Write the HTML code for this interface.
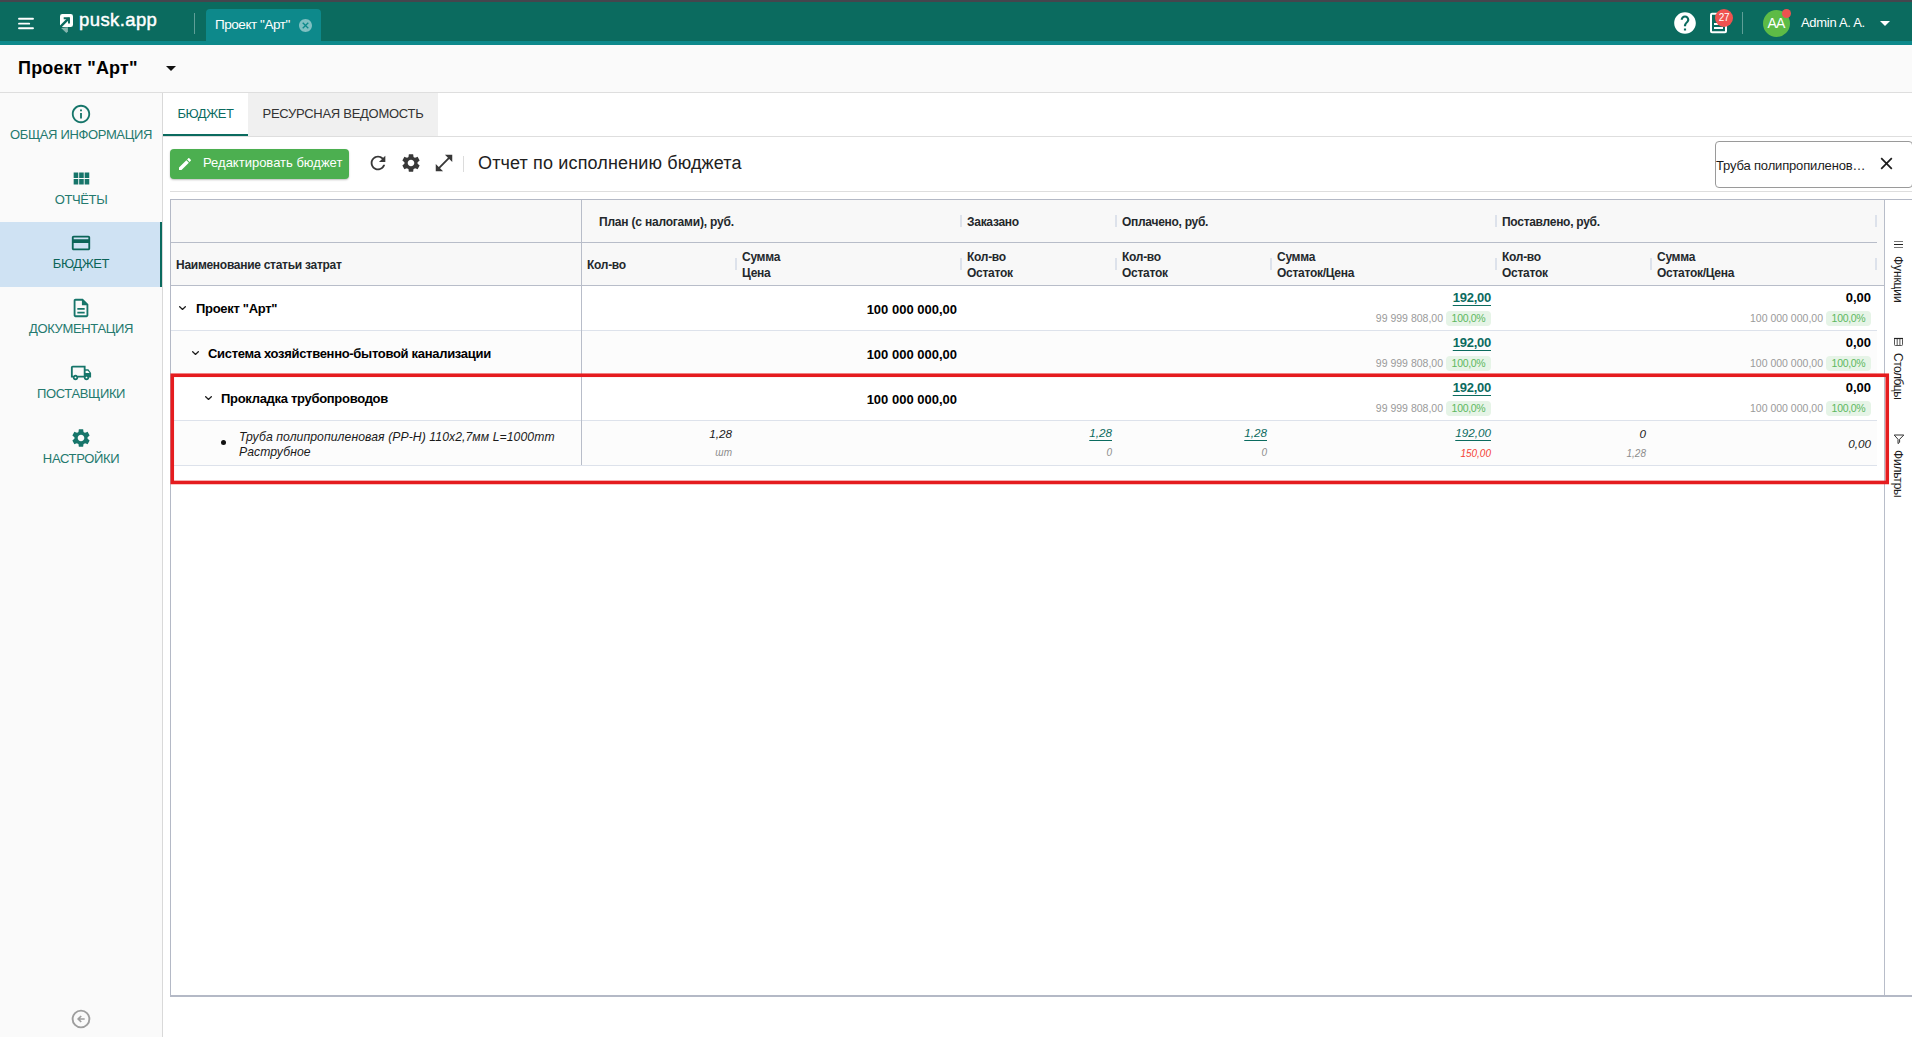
<!DOCTYPE html>
<html lang="ru">
<head>
<meta charset="utf-8">
<title>pusk.app</title>
<style>
*{box-sizing:border-box;margin:0;padding:0}
html,body{width:1912px;height:1037px;overflow:hidden;background:#fff}
body{position:relative;font-family:"Liberation Sans",sans-serif;font-size:13px;color:#000}
.abs{position:absolute}
svg{display:block}
/* ---------- top bar ---------- */
#strip{left:0;top:0;width:1912px;height:2px;background:#45454d}
#hdr{left:0;top:2px;width:1912px;height:43px;background:#0b6b5f;border-bottom:4px solid #0d898b}
#ham i{position:absolute;left:18px;height:2px;background:#fff;border-radius:1px}
#brand{transform:translateY(-.75px);left:79px;top:9px;font-size:18.5px;line-height:24px;color:#fff;font-weight:400;letter-spacing:.4px;-webkit-text-stroke:.45px #fff}
#hsep1{left:194px;top:13px;width:1px;height:21px;background:#5f9f97}
#ptab{left:206px;top:9px;width:115px;height:32px;background:#0d898b;border-radius:4px 4px 0 0}
#ptab span{position:absolute;left:9px;top:8px;font-size:13.5px;line-height:16px;color:#fff;letter-spacing:-.45px;white-space:nowrap}
#hsep2{left:1742px;top:12px;width:1px;height:22px;background:#5f9f97}
#avatar{left:1763px;top:10px;width:27px;height:27px;border-radius:50%;background:#5dbb46;color:#fff;font-size:14px;line-height:27px;text-align:center;letter-spacing:-.8px;text-indent:-.8px}
#avdot{left:1782px;top:9px;width:9px;height:9px;border-radius:50%;background:#ef5350}
#uname{left:1801px;top:15px;font-size:13px;line-height:16px;color:#fff;letter-spacing:-.3px;white-space:nowrap}
#badge{left:1715px;top:9px;width:18px;height:18px;border-radius:50%;background:#ef5350;color:#fff;font-size:10px;line-height:18px;text-align:center;letter-spacing:-.3px}
/* ---------- title bar ---------- */
#tbar{left:0;top:45px;width:1912px;height:48px;background:#fafafa;border-bottom:1px solid #dedede}
#ptitle{left:18px;top:57px;font-size:18px;line-height:22px;font-weight:700;color:#000;white-space:nowrap;letter-spacing:.2px}
#parrow{left:166px;top:66px;width:0;height:0;border-left:5px solid transparent;border-right:5px solid transparent;border-top:5px solid #111}
/* ---------- sidebar ---------- */
#side{left:0;top:93px;width:163px;height:944px;background:#fafafa;border-right:1px solid #d9d9d9}
.nav{position:absolute;left:0;width:162px;height:65px;color:#24796e}
.nav svg{position:absolute;left:70px;top:10px;fill:#16756a}
.nav span{position:absolute;left:0;width:162px;top:34px;text-align:center;font-size:13px;line-height:16px;letter-spacing:-.35px;white-space:nowrap}
.nav.act{background:#cfe2f3;border-right:2px solid #0b6b5f;color:#0b6458}
.nav.act svg{fill:#0b6458}
/* ---------- tabs ---------- */
#tabs{left:163px;top:93px;width:1749px;height:44px;border-bottom:1px solid #dedede;background:#fff}
.tab{position:absolute;top:0;height:43px;font-size:13px;line-height:16px;letter-spacing:-.38px;white-space:nowrap;padding-top:13px;text-align:center}
#tab1{left:0;width:85px;color:#0b6b5f;border-bottom:2px solid #0b6b5f}
#tab2{left:85px;width:190px;background:#f0f0f0;color:#333;letter-spacing:-.28px}
/* ---------- toolbar ---------- */
#btn{left:170px;top:149px;width:179px;height:30px;border-radius:4px;background:#4caf50;box-shadow:0 1px 2px rgba(0,0,0,.25)}
#btn span{position:absolute;left:33px;top:6px;color:#fff;font-size:13px;line-height:16px;white-space:nowrap}
#tsep{left:463px;top:156px;width:1px;height:16px;background:#dcdcdc}
#rtitle{left:478px;top:152px;font-size:18px;line-height:22px;color:#212121;white-space:nowrap;letter-spacing:.14px}
#search{left:1715px;top:141px;width:198px;height:47px;border:1px solid #9a9a9a;border-radius:4px;background:#fff}
#search span{position:absolute;left:0px;top:16px;font-size:13px;line-height:16px;color:#1c1c1c;letter-spacing:-.16px;white-space:nowrap}
#tline{left:170px;top:191px;width:1742px;height:1px;background:#dedede}
/* ---------- grid ---------- */
#grid{left:170px;top:199px;width:1742px;height:798px;border-top:1px solid #b4b9c6;border-left:1px solid #b4b9c6;border-bottom:2px solid #b4b9c6;background:#fff}
#ghead{left:171px;top:200px;width:1713px;height:85px;background:#f8f8f8}
.hl{position:absolute;background:#b8bdc9;height:1px}
.vl{position:absolute;background:#b8bdc9;width:1px}
.hs{position:absolute;width:2px;height:12px;background:#dde2eb}
.ht{position:absolute;font-size:12px;line-height:16px;font-weight:700;color:#24282c;letter-spacing:-.28px;white-space:nowrap}
.row{position:absolute;left:171px;width:1706px;height:45px;border-bottom:1px solid #dde2eb}
.row.odd{background:#fcfcfc}
.gn{position:absolute;font-size:13px;line-height:16px;font-weight:700;color:#000;letter-spacing:-.3px;white-space:nowrap}
.num{position:absolute;font-size:13px;line-height:16px;font-weight:700;color:#000;white-space:nowrap;text-align:right}
.sub{position:absolute;font-size:10.5px;line-height:13px;color:#9a9a9a;white-space:nowrap;text-align:right}
.pct{position:absolute;width:45px;height:15px;border-radius:4px;background:#e6f4e7;color:#5cb860;font-size:10.5px;line-height:15px;text-align:center;letter-spacing:-.3px}
.it{position:absolute;font-size:11.7px;line-height:16px;font-style:italic;color:#1a1a1a;white-space:nowrap;text-align:right}
.its{position:absolute;font-size:10px;line-height:14px;font-style:italic;color:#8d8d8d;white-space:nowrap;text-align:right}
.lnk{color:#0b6b5f !important;text-decoration:underline;text-underline-offset:3px;text-decoration-thickness:1px}
.num.lnk{letter-spacing:-.25px}
.chev{position:absolute;width:7px;height:4px}
/* side tool panel */
.vt{position:absolute;font-size:12px;line-height:14px;color:#1c1c1c;white-space:nowrap;transform-origin:0 0;transform:rotate(90deg);letter-spacing:-.1px}
</style>
</head>
<body>
<!-- TOP BAR -->
<div class="abs" id="hdr"></div>
<div class="abs" id="strip"></div>
<svg class="abs" style="left:16px;top:14px" width="20" height="18" viewBox="0 0 20 18"><path d="M3 4.750H17M3 9.650H13.200M3 14.250H17" stroke="#fff" stroke-width="1.900" stroke-linecap="round" fill="none"/></svg>
<svg class="abs" style="left:59px;top:13px" width="16" height="21" viewBox="0 0 16 21">
  <rect x="1" y="1" width="13" height="13" rx="2.300" fill="#fff"/>
  <path d="M4.700 5.200H10V10.500" fill="none" stroke="#0b6b5f" stroke-width="1.900"/>
  <path d="M10 5.200L0 15.200" fill="none" stroke="#0b6b5f" stroke-width="2.500"/>
  <path d="M2.100 15L8.900 14.300V18.500L7.400 19.900z" fill="#85b5ae"/>
</svg>
<div class="abs" id="brand">pusk.app</div>
<div class="abs" id="hsep1"></div>
<div class="abs" id="ptab"><span>Проект "Арт"</span>
  <svg class="abs" style="left:93px;top:9.500px" width="13" height="13" viewBox="2 2 20 20"><path fill="#7fc0c2" d="M12 2C6.47 2 2 6.47 2 12s4.47 10 10 10 10-4.47 10-10S17.53 2 12 2zm5 13.59L15.59 17 12 13.410 8.41 17 7 15.59 10.59 12 7 8.41 8.41 7 12 10.59 15.59 7 17 8.41 13.41 12 17 15.59z"/></svg>
</div>
<svg class="abs" style="left:1672px;top:9.500px" width="26" height="26" viewBox="0 0 24 24"><circle cx="12" cy="12" r="8" fill="#0b6b5f"/><path fill="#fff" d="M12 2C6.48 2 2 6.48 2 12s4.48 10 10 10 10-4.48 10-10S17.52 2 12 2zm1 17h-2v-2h2v2zm2.070-7.75l-.9.92C13.45 12.9 13 13.5 13 15h-2v-.5c0-1.1.45-2.1 1.17-2.83l1.24-1.26c.37-.36.59-.86.59-1.41 0-1.1-.9-2-2-2s-2 .9-2 2H8c0-2.210 1.79-4 4-4s4 1.79 4 4c0 .88-.36 1.68-.93 2.25z"/></svg>
<svg class="abs" style="left:1709px;top:11.500px" width="20" height="22" viewBox="0 0 20 22"><rect x="2" y="1.800" width="15" height="18.400" rx="1" fill="none" stroke="#fff" stroke-width="2"/><path d="M5 12h9M5 16h9" stroke="#fff" stroke-width="2"/></svg>
<div class="abs" id="badge">27</div>
<div class="abs" id="hsep2"></div>
<div class="abs" id="avatar">AA</div>
<div class="abs" id="avdot"></div>
<div class="abs" id="uname">Admin A. A.</div>
<div class="abs" style="left:1880px;top:21px;width:0;height:0;border-left:5px solid transparent;border-right:5px solid transparent;border-top:5px solid #fff"></div>

<!-- TITLE BAR -->
<div class="abs" id="tbar"></div>
<div class="abs" id="ptitle">Проект "Арт"</div>
<div class="abs" id="parrow"></div>

<!-- SIDEBAR -->
<div class="abs" id="side">
  <div class="nav" style="top:0"><svg width="22" height="22" viewBox="0 0 24 24"><path d="M11 17h2v-6h-2v6zm1-15C6.48 2 2 6.48 2 12s4.48 10 10 10 10-4.48 10-10S17.52 2 12 2zm0 18c-4.41 0-8-3.59-8-8s3.59-8 8-8 8 3.59 8 8-3.59 8-8 8zM11 9h2V7h-2v2z"/></svg><span>ОБЩАЯ ИНФОРМАЦИЯ</span></div>
  <div class="nav" style="top:65px"><svg width="22" height="22" viewBox="0 0 24 24"><path d="M4 11h5V5H4v6zm0 7h5v-6H4v6zm6 0h5v-6h-5v6zm6 0h5v-6h-5v6zm-6-7h5V5h-5v6zm6-6v6h5V5h-5z"/></svg><span>ОТЧЁТЫ</span></div>
  <div class="nav act" style="top:129px"><svg width="22" height="22" viewBox="0 0 24 24"><path d="M20 4H4c-1.11 0-1.99.89-1.99 2L2 18c0 1.11.89 2 2 2h16c1.11 0 2-.89 2-2V6c0-1.11-.89-2-2-2zm0 14H4v-6h16v6zm0-10H4V6h16v2z"/></svg><span>БЮДЖЕТ</span></div>
  <div class="nav" style="top:194px"><svg width="22" height="22" viewBox="0 0 24 24"><path d="M8 16h8v2H8zm0-4h8v2H8zm6-10H6c-1.1 0-2 .9-2 2v16c0 1.1.89 2 1.99 2H18c1.1 0 2-.9 2-2V8l-6-6zm4 18H6V4h7v5h5v11z"/></svg><span>ДОКУМЕНТАЦИЯ</span></div>
  <div class="nav" style="top:259px"><svg width="22" height="22" viewBox="0 0 24 24"><path d="M20 8h-3V4H3c-1.1 0-2 .9-2 2v11h2c0 1.660 1.34 3 3 3s3-1.34 3-3h6c0 1.660 1.34 3 3 3s3-1.34 3-3h2v-5l-3-4zm-.5 1.5l1.96 2.5H17V9.5h2.5zM6 18c-.55 0-1-.45-1-1s.45-1 1-1 1 .45 1 1-.45 1-1 1zm2.220-3c-.55-.61-1.33-1-2.22-1s-1.67.39-2.22 1H3V6h12v9H8.220zM18 18c-.55 0-1-.45-1-1s.45-1 1-1 1 .45 1 1-.45 1-1 1z"/></svg><span>ПОСТАВЩИКИ</span></div>
  <div class="nav" style="top:324px"><svg width="22" height="22" viewBox="0 0 24 24"><path d="M19.140 12.940c.04-.3.06-.61.06-.94 0-.32-.02-.64-.07-.94l2.030-1.580c.18-.14.23-.41.12-.61l-1.920-3.320c-.12-.22-.37-.29-.59-.22l-2.390.96c-.5-.38-1.030-.7-1.620-.94l-.36-2.540c-.04-.24-.24-.41-.48-.41h-3.840c-.24 0-.43.17-.47.41l-.36 2.540c-.59.24-1.130.57-1.620.94l-2.390-.96c-.22-.08-.47 0-.59.22L2.740 8.870c-.12.21-.08.47.12.61l2.030 1.580c-.05.3-.09.63-.09.94s.02.64.07.94l-2.030 1.580c-.18.14-.23.41-.12.61l1.920 3.320c.12.22.37.29.59.22l2.390-.96c.5.38 1.030.7 1.620.94l.36 2.540c.05.24.24.41.48.41h3.840c.24 0 .44-.17.47-.41l.36-2.540c.59-.24 1.130-.56 1.620-.94l2.390.96c.22.08.47 0 .59-.22l1.920-3.320c.12-.22.07-.47-.12-.61l-2.010-1.580zM12 15.600c-1.980 0-3.600-1.620-3.600-3.600s1.620-3.600 3.600-3.600 3.600 1.620 3.600 3.600-1.620 3.600-3.600 3.600z"/></svg><span>НАСТРОЙКИ</span></div>
  <svg class="abs" style="left:71.350px;top:916.200px" width="20" height="20" viewBox="0 0 20 20"><circle cx="10" cy="10" r="8.400" fill="none" stroke="#9e9e9e" stroke-width="1.900"/><path d="M13.700 10H7.400M10.200 7L7.200 10l3 3" fill="none" stroke="#9e9e9e" stroke-width="1.700"/></svg>
</div>

<!-- TABS -->
<div class="abs" id="tabs">
  <div class="tab" id="tab1">БЮДЖЕТ</div>
  <div class="tab" id="tab2">РЕСУРСНАЯ ВЕДОМОСТЬ</div>
</div>

<!-- TOOLBAR -->
<div class="abs" id="btn">
  <svg class="abs" style="left:7px;top:6.500px" width="16" height="16" viewBox="0 0 24 24"><path fill="#fff" d="M3 17.250V21h3.750L17.810 9.940l-3.750-3.750L3 17.250zM20.710 7.040c.39-.39.39-1.020 0-1.410l-2.340-2.340c-.39-.39-1.020-.39-1.410 0l-1.830 1.830 3.750 3.750 1.830-1.830z"/></svg>
  <span>Редактировать бюджет</span>
</div>
<svg class="abs" style="left:367px;top:152px" width="22" height="22" viewBox="0 0 24 24"><path fill="#383838" d="M17.650 6.350C16.200 4.900 14.210 4 12 4c-4.420 0-7.990 3.580-7.990 8s3.570 8 7.990 8c3.730 0 6.840-2.550 7.730-6h-2.080c-.82 2.330-3.040 4-5.650 4-3.310 0-6-2.690-6-6s2.690-6 6-6c1.660 0 3.140.69 4.220 1.780L13 11h7V4l-2.350 2.350z"/></svg>
<svg class="abs" style="left:400px;top:152px" width="22" height="22" viewBox="0 0 24 24"><path fill="#383838" d="M19.140 12.940c.04-.3.06-.61.06-.94 0-.32-.02-.64-.07-.94l2.030-1.580c.18-.14.23-.41.12-.61l-1.920-3.320c-.12-.22-.37-.29-.59-.22l-2.390.96c-.5-.38-1.030-.7-1.620-.94l-.36-2.540c-.04-.24-.24-.41-.48-.41h-3.840c-.24 0-.43.17-.47.41l-.36 2.540c-.59.24-1.130.57-1.620.94l-2.390-.96c-.22-.08-.47 0-.59.22L2.740 8.870c-.12.21-.08.47.12.61l2.030 1.580c-.05.3-.09.63-.09.94s.02.64.07.94l-2.030 1.580c-.18.14-.23.41-.12.61l1.920 3.320c.12.22.37.29.59.22l2.390-.96c.5.38 1.030.7 1.620.94l.36 2.540c.05.24.24.41.48.41h3.840c.24 0 .44-.17.47-.41l.36-2.540c.59-.24 1.130-.56 1.620-.94l2.390.96c.22.08.47 0 .59-.22l1.920-3.320c.12-.22.07-.47-.12-.61l-2.010-1.580zM12 15.600c-1.980 0-3.600-1.620-3.600-3.600s1.620-3.600 3.600-3.600 3.600 1.620 3.600 3.600-1.620 3.600-3.600 3.600z"/></svg>
<svg class="abs" style="left:433px;top:152px" width="22" height="22" viewBox="0 0 24 24"><path fill="#383838" d="M21 11V3h-8l3.290 3.290-10 10L3 13v8h8l-3.290-3.290 10-10z"/></svg>
<div class="abs" id="tsep"></div>
<div class="abs" id="rtitle">Отчет по исполнению бюджета</div>
<div class="abs" id="search"><span>Труба полипропиленов…</span>
  <svg class="abs" style="left:164px;top:15px" width="13" height="13" viewBox="0 0 13 13"><path d="M1.200 1.200l10.600 10.600M11.800 1.200L1.200 11.800" stroke="#1c1c1c" stroke-width="1.700" fill="none"/></svg>
</div>
<div class="abs" id="tline"></div>

<!-- GRID -->
<div class="abs" id="grid"></div>
<div class="abs" id="ghead"></div>
<div id="gridc">
<!-- header lines -->
<div class="hl" style="left:171px;top:242px;width:1706px"></div>
<div class="hl" style="left:171px;top:285px;width:1713px"></div>
<!-- header separators row1 -->
<div class="hs" style="left:960px;top:215px"></div>
<div class="hs" style="left:1115px;top:215px"></div>
<div class="hs" style="left:1495px;top:215px"></div>
<div class="hs" style="left:1875px;top:215px"></div>
<!-- header separators row2 -->
<div class="hs" style="left:735px;top:258px"></div>
<div class="hs" style="left:960px;top:258px"></div>
<div class="hs" style="left:1115px;top:258px"></div>
<div class="hs" style="left:1270px;top:258px"></div>
<div class="hs" style="left:1495px;top:258px"></div>
<div class="hs" style="left:1650px;top:258px"></div>
<div class="hs" style="left:1875px;top:258px"></div>
<!-- header texts -->
<div class="ht" style="left:599px;top:214px;letter-spacing:-.2px">План (с налогами), руб.</div>
<div class="ht" style="left:967px;top:214px">Заказано</div>
<div class="ht" style="left:1122px;top:214px">Оплачено, руб.</div>
<div class="ht" style="left:1502px;top:214px">Поставлено, руб.</div>
<div class="ht" style="left:176px;top:257px">Наименование статьи затрат</div>
<div class="ht" style="left:587px;top:257px">Кол-во</div>
<div class="ht" style="left:742px;top:249px">Сумма<br>Цена</div>
<div class="ht" style="left:967px;top:249px">Кол-во<br>Остаток</div>
<div class="ht" style="left:1122px;top:249px">Кол-во<br>Остаток</div>
<div class="ht" style="left:1277px;top:249px">Сумма<br>Остаток/Цена</div>
<div class="ht" style="left:1502px;top:249px">Кол-во<br>Остаток</div>
<div class="ht" style="left:1657px;top:249px">Сумма<br>Остаток/Цена</div>
<!-- rows -->
<div class="row" style="top:286px"></div>
<div class="row odd" style="top:331px"></div>
<div class="row" style="top:376px"></div>
<div class="row odd" style="top:421px"></div>
<div class="vl" style="left:581px;top:200px;height:265px"></div>
<div class="vl" style="left:1884px;top:200px;height:795px"></div>
<!-- row 1 -->
<svg class="chev" style="left:179px;top:306px" viewBox="0 0 7 4"><path d="M.3.300l3.200 3.200 3.200-3.200" fill="none" stroke="#1a1a1a" stroke-width="1.250"/></svg>
<div class="gn" style="left:196px;top:301px">Проект "Арт"</div>
<div class="num" style="right:955px;top:302px">100 000 000,00</div>
<div class="num lnk" style="right:421px;top:290px">192,00</div>
<div class="sub" style="right:469px;top:312px">99 999 808,00</div>
<div class="pct" style="left:1446px;top:311px">100,0%</div>
<div class="num" style="right:41px;top:290px">0,00</div>
<div class="sub" style="right:89px;top:312px">100 000 000,00</div>
<div class="pct" style="left:1826px;top:311px">100,0%</div>
<!-- row 2 -->
<svg class="chev" style="left:192px;top:351px" viewBox="0 0 7 4"><path d="M.3.300l3.200 3.200 3.200-3.200" fill="none" stroke="#1a1a1a" stroke-width="1.250"/></svg>
<div class="gn" style="left:208px;top:346px">Система хозяйственно-бытовой канализации</div>
<div class="num" style="right:955px;top:347px">100 000 000,00</div>
<div class="num lnk" style="right:421px;top:335px">192,00</div>
<div class="sub" style="right:469px;top:357px">99 999 808,00</div>
<div class="pct" style="left:1446px;top:356px">100,0%</div>
<div class="num" style="right:41px;top:335px">0,00</div>
<div class="sub" style="right:89px;top:357px">100 000 000,00</div>
<div class="pct" style="left:1826px;top:356px">100,0%</div>
<!-- row 3 -->
<svg class="chev" style="left:205px;top:396px" viewBox="0 0 7 4"><path d="M.3.300l3.200 3.200 3.200-3.200" fill="none" stroke="#1a1a1a" stroke-width="1.250"/></svg>
<div class="gn" style="left:221px;top:391px">Прокладка трубопроводов</div>
<div class="num" style="right:955px;top:392px">100 000 000,00</div>
<div class="num lnk" style="right:421px;top:380px">192,00</div>
<div class="sub" style="right:469px;top:402px">99 999 808,00</div>
<div class="pct" style="left:1446px;top:401px">100,0%</div>
<div class="num" style="right:41px;top:380px">0,00</div>
<div class="sub" style="right:89px;top:402px">100 000 000,00</div>
<div class="pct" style="left:1826px;top:401px">100,0%</div>
<!-- row 4 -->
<div class="abs" style="left:221px;top:440px;width:5px;height:5px;border-radius:50%;background:#111"></div>
<div class="it" style="left:239px;top:430px;text-align:left;font-size:12.2px;line-height:15px;letter-spacing:.08px">Труба полипропиленовая (PP-H) 110x2,7мм L=1000mm<br>Раструбное</div>
<div class="it" style="right:1180px;top:426px">1,28</div>
<div class="its" style="right:1180px;top:446px">шт</div>
<div class="it lnk" style="right:800px;top:425px">1,28</div>
<div class="its" style="right:800px;top:446px">0</div>
<div class="it lnk" style="right:645px;top:425px">1,28</div>
<div class="its" style="right:645px;top:446px">0</div>
<div class="it lnk" style="right:421px;top:425px">192,00</div>
<div class="its" style="right:421px;top:447px;color:#f44336">150,00</div>
<div class="it" style="right:266px;top:426px">0</div>
<div class="its" style="right:266px;top:447px">1,28</div>
<div class="it" style="right:41px;top:436px">0,00</div>
<!-- red highlight -->
<svg class="abs" style="left:168px;top:371px" width="1724" height="116" viewBox="0 0 1724 116"><rect x="4.250" y="4.250" width="1715" height="107.200" fill="none" stroke="#e51c1f" stroke-width="3.600"/></svg>
<!-- side tool panel -->
<svg class="abs" style="left:1893px;top:240px" width="11" height="9" viewBox="0 0 11 9"><path d="M1 1.500h9M1 7.500h9" stroke="#777" stroke-width="1"/><path d="M1 4.500h9" stroke="#222" stroke-width="1"/></svg>
<div class="vt" style="left:1905px;top:256px">Функции</div>
<svg class="abs" style="left:1893px;top:337px" width="11" height="10" viewBox="0 0 11 10"><rect x="1.500" y="1.500" width="8" height="7" rx=".8" fill="none" stroke="#555" stroke-width="1"/><path d="M1 1.500h9" stroke="#222" stroke-width="1.200"/><path d="M4.200 2v6M6.900 2v6" stroke="#555" stroke-width="1"/></svg>
<div class="vt" style="left:1905px;top:353px;letter-spacing:-.5px">Столбцы</div>
<svg class="abs" style="left:1893px;top:433px" width="12" height="12" viewBox="0 0 12 12"><path d="M1.200 2h9.600L6.600 6.300V9.300L5 10.600V6.300z" fill="none" stroke="#333" stroke-width="1"/></svg>
<div class="vt" style="left:1905px;top:449.500px;letter-spacing:-.2px">Фильтры</div>
</div>

</body>
</html>
